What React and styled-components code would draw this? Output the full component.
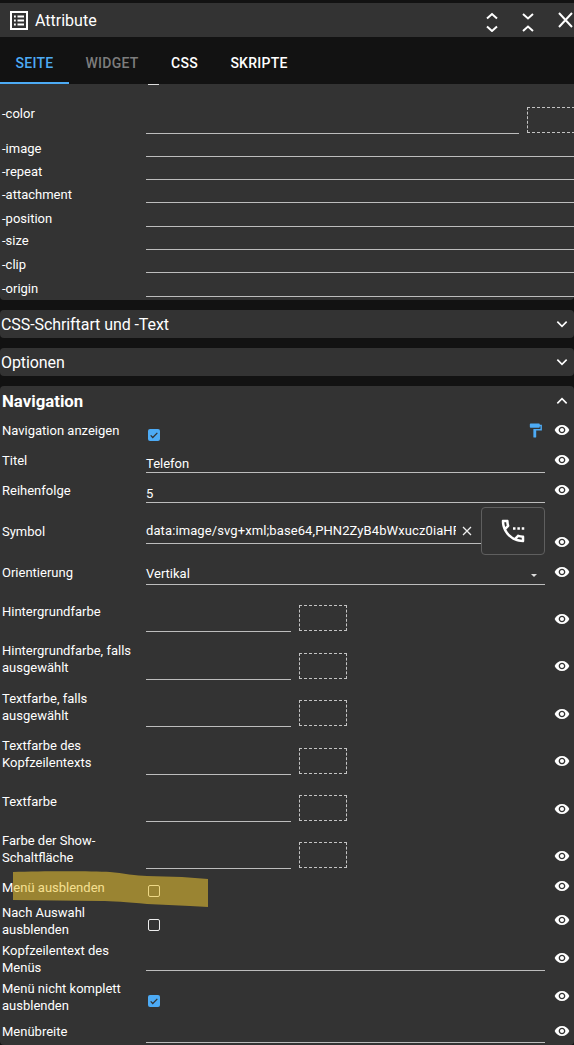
import React from 'react';
import styled, { createGlobalStyle } from 'styled-components';

const Global = createGlobalStyle`
  html, body { margin: 0; padding: 0; background: #111; }
  body { font-family: Roboto, "Liberation Sans", sans-serif; color: #fff; }
  * { box-sizing: border-box; }
`;
const Page = styled.div`
  width: 574px; height: 1045px; overflow: hidden; position: relative;
  background: #121212; padding-top: 3px;
`;
const Header = styled.header`
  height: 34px; background: #333; display: flex; align-items: center; padding-left: 10px;
`;
const Title = styled.h1`
  margin: 0 0 0 7px; font-size: 16px; font-weight: 400; flex: 1;
`;
const HeaderBtn = styled.button`
  border: 0; background: none; padding: 0; color: #fff; display: flex; width: ${p => p.$w}px;
  justify-content: center; margin-right: ${p => p.$mr || 0}px;
`;
const Tabs = styled.nav`
  height: 47px; background: #121212; display: flex;
`;
const Tab = styled.div`
  width: ${p => p.$w}px; display: flex; align-items: center; justify-content: center;
  font-size: 14px; font-weight: 500; letter-spacing: .25px; padding-top: 7px;
  color: ${p => p.$color};
  border-bottom: 2px solid ${p => p.$active ? '#4dabf5' : 'transparent'};
`;
const Panel = styled.section`
  background: #333; border-radius: 4px; margin-bottom: 10px;
`;
const TopPanel = styled(Panel)`
  height: 216px; position: relative;
  border-radius: 0 0 4px 4px;
`;
const Clipped = styled.span`
  position: absolute; left: 148px; top: 0; width: 11px; height: 1px; background: #ddd;
`;
const BgRow = styled.div`
  display: grid; grid-template-columns: 146px 1fr; grid-template-rows: ${p => p.$h}px; height: ${p => p.$h}px; position: relative;
`;
const Label = styled.div`
  font-size: 13px; line-height: 17px; padding-left: 2px; padding-top: ${p => p.$top || 0}px;
`;
const Field = styled.div`
  border-bottom: 1px solid #bdbdbd; height: ${p => p.$h || 24}px; align-self: end;
  width: ${p => p.$w ? p.$w + 'px' : 'auto'};
  font-size: 13px; line-height: 14px; display: flex; align-items: flex-end; padding-bottom: 1px;
`;
const ColorBox = styled.div`
  width: 48px; height: 26px; border: 1px dashed #c4c4c4; margin-bottom: 1px;
`;
const BgColor = styled(ColorBox)`
  position: absolute; right: -1px; bottom: 0;
`;
const Accordion = styled(Panel)`
  height: 28px; display: flex; align-items: center; justify-content: space-between;
  font-size: 16px; letter-spacing: -.08px; padding: 0 4px 0 1px;
`;
const NavPanel = styled(Panel)`
  margin: 0; height: 659px;
`;
const NavHead = styled.div`
  height: 30px; display: flex; align-items: center; justify-content: space-between;
  padding: 0 4px 1px 2px; font-size: 16.8px; font-weight: 700;
`;
const Row = styled.div`
  display: grid; grid-template-columns: 146px 399px 29px; grid-template-rows: ${p => p.$h}px; height: ${p => p.$h}px; position: relative;
`;
const Value = styled.div`
  display: flex; align-items: flex-end; gap: 8px; min-width: 0;
`;
const Eye = styled.svg`
  width: 16px; height: 16px; align-self: end; justify-self: end; margin-right: 4px;
  margin-bottom: ${p => p.$mb}px; fill: #fff;
`;
const Paint = styled.svg`
  width: 17px; height: 17px; fill: #4dabf5; margin: 0 1px 7px auto;
`;
const Check = styled.span`
  width: 12px; height: 12px; border-radius: 2px; margin: 0 0 ${p => p.$mb}px 2px;
  background: ${p => p.$on ? '#4dabf5' : 'transparent'};
  border: ${p => p.$on ? '0' : '1.5px solid #ededed'};
  display: flex; align-items: center; justify-content: center;
`;
const Symbol = styled.div`
  width: 335px; flex: none; border-bottom: 1px solid #bdbdbd; height: 24px;
  display: flex; align-items: center; font-size: 13px; padding-bottom: 2px; justify-content: space-between; padding-right: 7px;
`;
const SymbolText = styled.span`
  width: 310px; overflow: hidden; white-space: nowrap; letter-spacing: .1px;
`;
const IconButton = styled.div`
  width: 64px; height: 48px; flex: none; margin: 0 0 -11px -8px; border: 1px solid #5f5f5f; border-radius: 4px;
  display: flex; align-items: center; justify-content: center; background: #333;
`;
const Select = styled(Field)`
  justify-content: space-between; padding: 0 8px 3px 0; width: 100%;
`;
const Caret = styled.span`
  width: 0; height: 0; border-left: 3.5px solid transparent; border-right: 3.5px solid transparent;
  border-top: 3.5px solid #ddd; margin-bottom: 4px;
`;
const ColorField = styled.div`
  display: flex; align-items: flex-end; gap: 8px;
`;
const Marker = styled.svg`
  position: absolute; left: 12px; top: 870px; width: 198px; height: 38px; pointer-events: none;
`;

const EYE = 'M12 4.5C7 4.5 2.73 7.61 1 12c1.73 4.39 6 7.5 11 7.5s9.27-3.11 11-7.5c-1.73-4.39-6-7.5-11-7.5zM12 17c-2.76 0-5-2.24-5-5s2.24-5 5-5 5 2.24 5 5-2.24 5-5 5zm0-8c-1.66 0-3 1.34-3 3s1.34 3 3 3 3-1.34 3-3-1.34-3-3-3z';
const EyeIcon = ({ mb = 0 }) => <Eye $mb={mb} viewBox="0 0 24 24"><path d={EYE} /></Eye>;
const Chev = ({ up }) => (
  <svg width="16" height="16" viewBox="0 0 24 24" fill="none" stroke="#fff" strokeWidth="2.4">
    <path d={up ? 'M5 15.5l7-7 7 7' : 'M5 8.5l7 7 7-7'} />
  </svg>
);
const CheckBox = ({ on, mb }) => (
  <Check $on={on} $mb={mb}>
    {on && <svg width="10" height="10" viewBox="0 0 24 24" fill="none" stroke="#333" strokeWidth="3"><path d="M4 13l5 5L20 7" /></svg>}
  </Check>
);
const Color = ({ label, h, top, mb }) => (
  <Row $h={h}>
    <Label $top={top}>{label}</Label>
    <ColorField>
      <Field $w={145} />
      <ColorBox />
    </ColorField>
    <EyeIcon mb={mb} />
  </Row>
);
const bg = [['-image', 23, 6], ['-repeat', 23, 6], ['-attachment', 23, 6], ['-position', 24, 7], ['-size', 23, 5], ['-clip', 23, 6], ['-origin', 24, 7]];

export default function App() {
  return (
    <Page>
      <Global />
      <Header>
        <svg width="18" height="19" viewBox="0 0 18 19" fill="none" stroke="#fff">
          <rect x="1" y="1" width="16" height="17" strokeWidth="2" />
          <path d="M4 5.5h1.8M4 9.5h1.8M4 13.5h1.8M7.5 5.5h6.5M7.5 9.5h6.5M7.5 13.5h6.5" strokeWidth="1.8" />
        </svg>
        <Title>Attribute</Title>
        <HeaderBtn $w={16} $mr={20}>
          <svg width="16" height="24" viewBox="0 0 16 24" fill="none" stroke="#fff" strokeWidth="2"><path d="M3 10.5l5-4.5 5 4.5M3 18.5l5 4.5 5-4.5" /></svg>
        </HeaderBtn>
        <HeaderBtn $w={16} $mr={20}>
          <svg width="16" height="24" viewBox="0 0 16 24" fill="none" stroke="#fff" strokeWidth="2"><path d="M3 6l5 4.5 5-4.5M3 23l5-4.5 5 4.5" /></svg>
        </HeaderBtn>
        <HeaderBtn $w={18}>
          <svg width="18" height="18" viewBox="0 0 18 18" fill="none" stroke="#fff" strokeWidth="2"><path d="M3 2l13 14M16 2L3 16" /></svg>
        </HeaderBtn>
      </Header>
      <Tabs>
        <Tab $w={69} $active $color="#4dabf5">SEITE</Tab>
        <Tab $w={86} $color="#7d7d7d">WIDGET</Tab>
        <Tab $w={59} $color="#fff">CSS</Tab>
        <Tab $w={90} $color="#fff">SKRIPTE</Tab>
      </Tabs>
      <TopPanel>
        <Clipped />
        <BgRow $h={50}>
          <Label $top={21}>-color</Label>
          <Field $w={373} $h={26} />
          <BgColor />
        </BgRow>
        {bg.map(([n, h, top]) => (
          <BgRow key={n} $h={h}>
            <Label $top={top}>{n}</Label>
            <Field $h={20} />
          </BgRow>
        ))}
      </TopPanel>
      <Accordion>CSS-Schriftart und -Text<Chev /></Accordion>
      <Accordion>Optionen<Chev /></Accordion>
      <NavPanel>
        <NavHead>Navigation<Chev up /></NavHead>
        <Row $h={30}>
          <Label $top={6}>Navigation anzeigen</Label>
          <Value>
            <CheckBox on mb={5} />
            <Paint viewBox="0 0 24 24">
              <path d="M18 4V3c0-.55-.45-1-1-1H5c-.55 0-1 .45-1 1v4c0 .55.45 1 1 1h12c.55 0 1-.45 1-1V6h1v4H9v11c0 .55.45 1 1 1h2c.55 0 1-.45 1-1v-9h8V4h-3z" />
            </Paint>
          </Value>
          <EyeIcon mb={8} />
        </Row>
        <Row $h={27}>
          <Label $top={6}>Titel</Label>
          <Field>Telefon</Field>
          <EyeIcon mb={5} />
        </Row>
        <Row $h={30}>
          <Label $top={9}>Reihenfolge</Label>
          <Field>5</Field>
          <EyeIcon mb={5} />
        </Row>
        <Row $h={41}>
          <Label $top={20}>Symbol</Label>
          <Value>
            <Symbol>
              <SymbolText>data:image/svg+xml;base64,PHN2ZyB4bWxucz0iaHR0cDovL3d3dy53My5vcmcvMjAwMC9zdmci</SymbolText>
              <svg width="14" height="14" viewBox="0 0 14 14" fill="none" stroke="#eee" strokeWidth="1.3"><path d="M3 3l8 8M11 3l-8 8" /></svg>
            </Symbol>
            <IconButton>
              <svg width="30" height="30" viewBox="0 0 24 24" fill="#fff">
                <path d="M6.54 5c.06.89.21 1.76.45 2.59l-1.2 1.2c-.41-1.2-.67-2.47-.76-3.79h1.51m9.86 12.02c.85.24 1.72.39 2.6.45v1.49c-1.32-.09-2.59-.35-3.8-.75l1.2-1.19M7.5 3H4c-.55 0-1 .45-1 1 0 9.39 7.61 17 17 17 .55 0 1-.45 1-1v-3.49c0-.55-.45-1-1-1-1.24 0-2.45-.2-3.57-.57-.1-.04-.21-.05-.31-.05-.26 0-.51.1-.71.29l-2.2 2.2c-2.83-1.45-5.15-3.76-6.59-6.59l2.2-2.2c.28-.28.36-.67.25-1.02C8.7 6.45 8.5 5.25 8.5 4c0-.55-.45-1-1-1z" />
                <path d="M12 9h2v2h-2zM15.5 9h2v2h-2zM19 9h2v2h-2z" />
              </svg>
            </IconButton>
          </Value>
          <EyeIcon mb={-6} />
        </Row>
        <Row $h={41}>
          <Label $top={20}>Orientierung</Label>
          <Select>Vertikal<Caret /></Select>
          <EyeIcon mb={5} />
        </Row>
        <Color label="Hintergrundfarbe" h={47} top={18} mb={5} />
        <Color label={<>Hintergrundfarbe, falls<br />ausgewählt</>} h={48} top={10} mb={6} />
        <Color label={<>Textfarbe, falls<br />ausgewählt</>} h={47} top={10} mb={5} />
        <Color label={<>Textfarbe des<br />Kopfzeilentexts</>} h={48} top={10} mb={6} />
        <Color label="Textfarbe" h={47} top={18} mb={5} />
        <Color label={<>Farbe der Show-<br />Schaltfläche</>} h={47} top={10} mb={5} />
        <Row $h={34}>
          <Label $top={10}>Menü ausblenden</Label>
          <Value><CheckBox mb={6} /></Value>
          <EyeIcon mb={9} />
        </Row>
        <Row $h={38}>
          <Label $top={1}>Nach Auswahl<br />ausblenden</Label>
          <Value><CheckBox mb={10} /></Value>
          <EyeIcon mb={13} />
        </Row>
        <Row $h={30}>
          <Label $top={1}>Kopfzeilentext des<br />Menüs</Label>
          <Field />
          <EyeIcon mb={5} />
        </Row>
        <Row $h={38}>
          <Label $top={9}>Menü nicht komplett<br />ausblenden</Label>
          <Value><CheckBox on mb={2} /></Value>
          <EyeIcon mb={5} />
        </Row>
        <Row $h={34}>
          <Label $top={14}>Menübreite</Label>
          <Field />
          <EyeIcon mb={4} />
        </Row>
      </NavPanel>
      <Marker viewBox="0 0 198 38">
        <path d="M1 2C30 1 80 1 98 2 110 3 125 6 135 6L170 7 196 9V37L178 36 135 34C115 32 100 31 88 31L1 30Z" fill="rgb(238,198,49)" fillOpacity=".55" />
      </Marker>
    </Page>
  );
}
